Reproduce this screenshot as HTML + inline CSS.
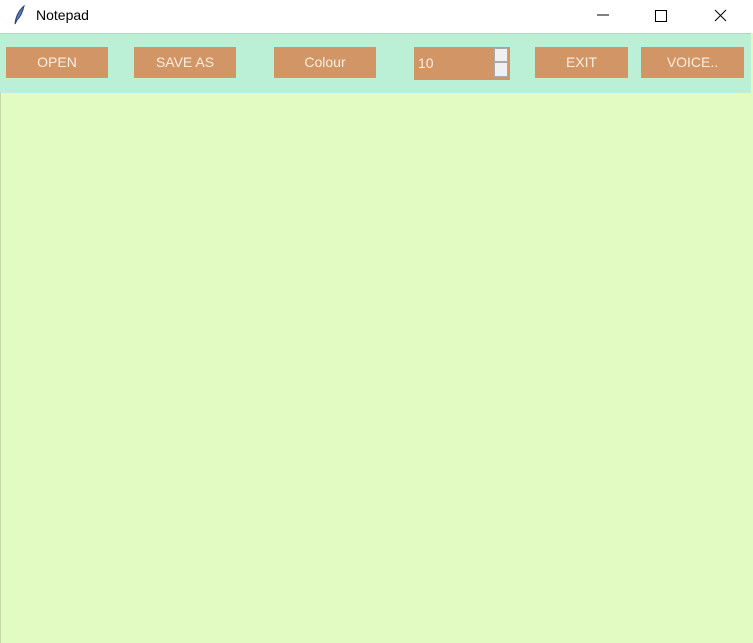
<!DOCTYPE html>
<html><head><meta charset="utf-8"><style>
body{margin:0;width:753px;height:643px;overflow:hidden;background:#e2fbc2;font-family:"Liberation Sans",sans-serif;position:relative}
.title{position:absolute;left:0;top:0;width:753px;height:33px;background:#fff}
.title span{position:absolute;left:36px;top:7px;font-size:14px;color:#000}
.bar{position:absolute;left:0;top:33px;width:751px;height:59px;background:#bbf0d6;border-top:1px solid #a8dcc4}
.b{position:absolute;top:47px;height:31px;background:#d29565;color:#fbeee0;font-size:14px;text-align:center;line-height:31px}
.right{position:absolute;right:0;top:33px;width:2px;height:610px;background:#ccc}
</style></head><body>
<div class="title">
<svg style="position:absolute;left:12px;top:5px" width="14" height="20" viewBox="0 0 14 20"><path d="M3 19 Q4 8 12 1 Q10 10 5 15 Z" fill="#5a7fb8" stroke="#2a3f6a" stroke-width="1"/></svg>
<span>Notepad</span>
<svg style="position:absolute;left:596px;top:8px" width="140" height="16"><line x1="1" y1="7" x2="13" y2="7" stroke="#000"/><rect x="59.5" y="2.5" width="11" height="11" fill="none" stroke="#000"/><path d="M119 2 L130 13 M130 2 L119 13" stroke="#000"/></svg>
</div>
<div class="bar"></div>
<div class="b" style="left:6px;width:102px">OPEN</div>
<div class="b" style="left:134px;width:102px">SAVE AS</div>
<div class="b" style="left:274px;width:102px">Colour</div>
<div class="b" style="left:414px;width:96px;text-align:left;padding-left:4px;box-sizing:border-box;height:33px;line-height:33px">10</div>
<div style="position:absolute;left:494px;top:48px;width:14px;height:14px;background:#f0f0f0;border:1px solid #aaa;box-sizing:border-box"></div>
<div style="position:absolute;left:494px;top:62px;width:14px;height:15px;background:#f0f0f0;border:1px solid #aaa;box-sizing:border-box"></div>
<div class="b" style="left:535px;width:93px">EXIT</div>
<div class="b" style="left:641px;width:103px">VOICE..</div>
<div style="position:absolute;left:0;top:92px;width:1px;height:551px;background:#c8d8b0"></div>
</body></html>
